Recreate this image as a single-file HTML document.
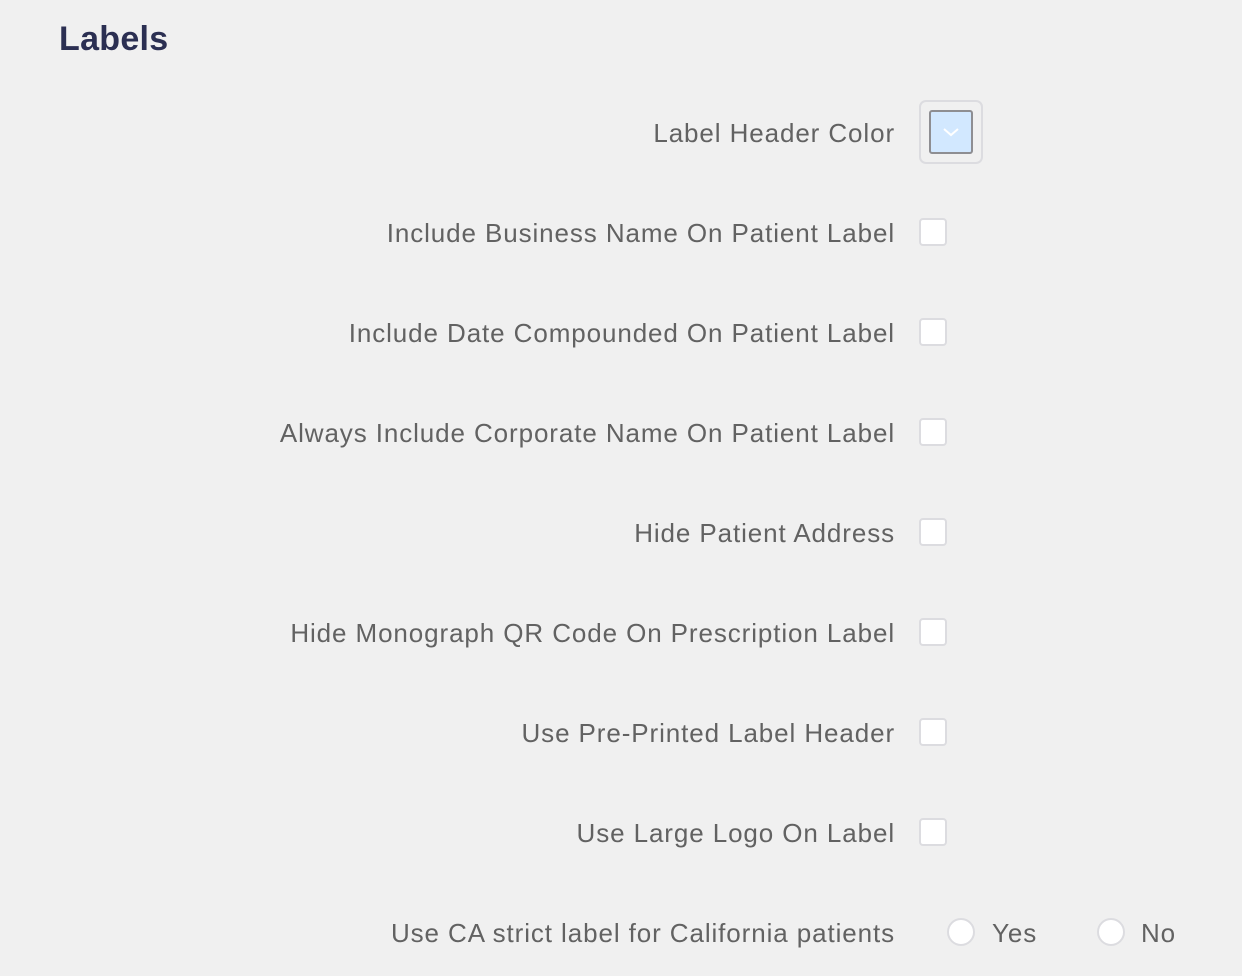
<!DOCTYPE html>
<html><head><style>
body{margin:0;background:#f0f0f0;width:1242px;height:976px;overflow:hidden;font-family:"Liberation Sans",sans-serif;position:relative}
h1{position:absolute;left:59px;top:20px;margin:0;font-size:34px;font-weight:bold;color:#2b2f52;letter-spacing:0.3px}
.l{position:absolute;right:347px;font-size:26px;letter-spacing:0.9px;color:#626262;line-height:30px;white-space:nowrap}
.cb{position:absolute;left:919px;width:24px;height:24px;border:2px solid #dcdce0;border-radius:4px;background:#fff}
.r{position:absolute;width:24px;height:24px;border:2px solid #dcdce0;border-radius:50%;background:#fff;top:918px}
.t{position:absolute;top:918px;font-size:26px;letter-spacing:0.9px;color:#626262;line-height:30px}
</style></head><body>
<h1>Labels</h1>
<div class="l" style="top:118px">Label Header Color</div>
<div style="position:absolute;left:919px;top:100px;width:60px;height:60px;border:2px solid #dcdce0;border-radius:7px;"></div>
<div style="position:absolute;left:929px;top:110px;width:40px;height:40px;border:2px solid #8e8e92;border-radius:3px;background:#d2e8ff"><svg width="40" height="40" style="position:absolute;left:0;top:0"><path d="M13 17 L20 23 L27 17" stroke="#fff" stroke-width="2" fill="none"/></svg></div>
<div class="l" style="top:218px">Include Business Name On Patient Label</div><div class="cb" style="top:218px"></div>
<div class="l" style="top:318px">Include Date Compounded On Patient Label</div><div class="cb" style="top:318px"></div>
<div class="l" style="top:418px">Always Include Corporate Name On Patient Label</div><div class="cb" style="top:418px"></div>
<div class="l" style="top:518px">Hide Patient Address</div><div class="cb" style="top:518px"></div>
<div class="l" style="top:618px">Hide Monograph QR Code On Prescription Label</div><div class="cb" style="top:618px"></div>
<div class="l" style="top:718px">Use Pre-Printed Label Header</div><div class="cb" style="top:718px"></div>
<div class="l" style="top:818px">Use Large Logo On Label</div><div class="cb" style="top:818px"></div>
<div class="l" style="top:918px">Use CA strict label for California patients</div>
<div class="r" style="left:947px"></div><div class="t" style="left:992px">Yes</div>
<div class="r" style="left:1097px"></div><div class="t" style="left:1141px">No</div>
</body></html>
